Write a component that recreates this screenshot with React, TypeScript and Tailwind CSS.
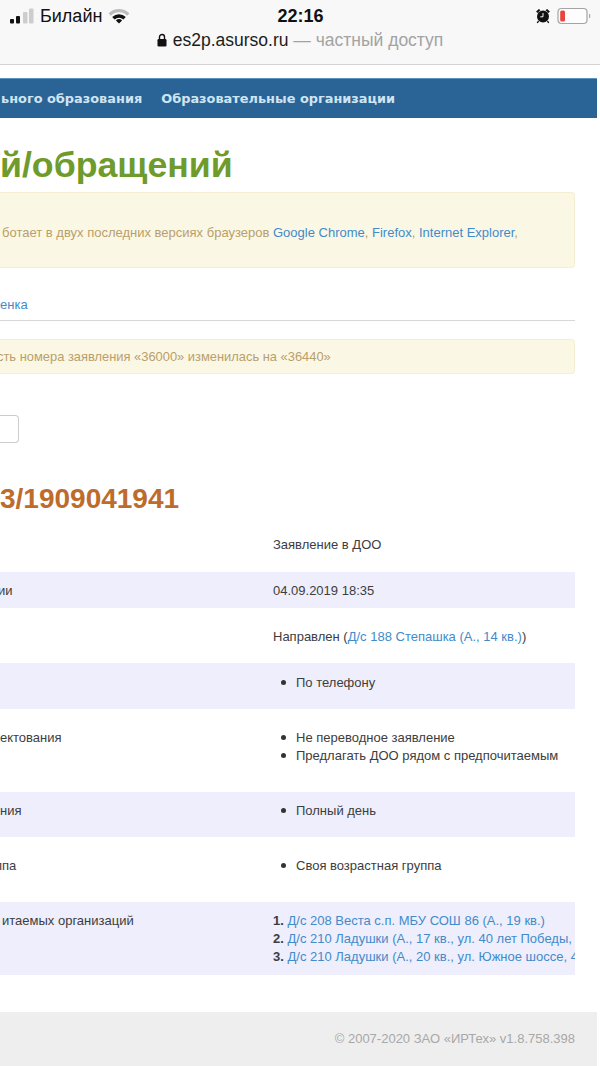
import type { ReactNode } from "react";

const sans = "font-['Liberation_Sans',Arial,sans-serif]";
const link = "text-[#428bca]";

const SignalIcon = () => (
  <svg width="25" height="16" viewBox="0 0 25 16" className="block">
    <rect x="1" y="11" width="4" height="4.5" rx="1" fill="#111" />
    <rect x="7" y="8" width="4" height="7.5" rx="1" fill="#111" />
    <rect x="14" y="4" width="4.5" height="11.5" rx="1" fill="#cdcdcd" />
    <rect x="20" y="0.5" width="4.5" height="15" rx="1" fill="#cdcdcd" />
  </svg>
);

const WifiIcon = () => (
  <svg width="22" height="16" viewBox="0 0 22 16" className="block">
    <path d="M0.5 5.2 A15 15 0 0 1 21.5 5.2 L19.2 7.7 A11.6 11.6 0 0 0 2.8 7.7 Z" fill="#bdbdbd" />
    <path d="M4.2 9 A10 10 0 0 1 17.8 9 L15.4 11.4 A6.6 6.6 0 0 0 6.6 11.4 Z" fill="#111" />
    <path d="M7.9 12.4 A4.6 4.6 0 0 1 14.1 12.4 L11 15.5 Z" fill="#111" />
  </svg>
);

const LockIcon = () => (
  <svg width="10" height="14" viewBox="0 0 10 14" className="block">
    <path d="M2.5 6 V4 a2.5 2.5 0 0 1 5 0 V6" fill="none" stroke="#111" strokeWidth="1.4" />
    <rect x="0.5" y="6" width="9" height="7.5" rx="1.2" fill="#111" />
  </svg>
);

const AlarmIcon = () => (
  <svg width="16" height="16" viewBox="0 0 15 16" className="block">
    <circle cx="7.5" cy="8.5" r="6" fill="#111" />
    <path d="M0.6 3.6 L3.4 0.9 L5 2.2 L1.9 5 Z M14.4 3.6 L11.6 0.9 L10 2.2 L13.1 5 Z" fill="#111" />
    <path d="M7.5 5 V8.8 H4.8" fill="none" stroke="#f8f8f8" strokeWidth="1" />
    <path d="M3 13 L1.8 15 M12 13 L13.2 15" stroke="#111" strokeWidth="1.4" />
  </svg>
);

const BatteryIcon = () => (
  <svg width="35" height="18" viewBox="0 0 35 18" className="block">
    <rect x="1" y="1.5" width="29" height="15" rx="3.5" fill="#fdfdfd" stroke="#a5a5a5" strokeWidth="1.2" />
    <rect x="3.2" y="3.6" width="4.8" height="10.8" rx="1.5" fill="#e8453c" />
    <path d="M32 6.5 a3 3 0 0 1 0 5 Z" fill="#a5a5a5" />
  </svg>
);

const BrowserBar = () => (
  <header className="h-[65px] bg-[#f8f8f8] border-b border-[#d4d4d4] flex flex-col">
    <div className="h-[29px] pt-[3px] pl-[9px] pr-[8px] grid grid-cols-3 items-center">
      <div className="flex items-center">
        <SignalIcon />
        <span className={`${sans} ml-[6px] text-[18px] leading-5 text-[#111]`}>Билайн</span>
        <span className="ml-[6px]"><WifiIcon /></span>
      </div>
      <div className={`${sans} text-center text-[18px] leading-5 font-bold text-[#111]`}>22:16</div>
      <div className="flex items-center justify-end gap-[6px]">
        <AlarmIcon />
        <BatteryIcon />
      </div>
    </div>
    <div className={`${sans} h-[22px] flex items-center justify-center gap-[6px] text-[17.5px] leading-5`}>
      <LockIcon />
      <span className="text-[#1c1c1c]">
        es2p.asurso.ru <span className="text-[#a3a3a3]">— частный доступ</span>
      </span>
    </div>
  </header>
);

const NavBar = () => (
  <nav className="mt-[13px] mr-[3px] h-[40px] pl-[1px] bg-[#2a6496] border-t border-[#5b93bd] flex items-center gap-[19px] font-['DejaVu_Sans',Verdana,sans-serif] text-[12.9px] font-bold text-[#d0e4f2] whitespace-nowrap">
    <span>ьного образования</span>
    <span>Образовательные организации</span>
  </nav>
);

const Bullets = ({ items }: { items: string[] }) => (
  <ul>
    {items.map((item) => (
      <li key={item} className="flex">
        <span className="ml-[8px] mr-[10px] mt-[6px] size-[5px] rounded-full bg-[#333]" />
        {item}
      </li>
    ))}
  </ul>
);

const Row = ({ label, shaded, cls, children }: { label?: ReactNode; shaded?: boolean; cls: string; children: ReactNode }) => (
  <div className={`grid grid-cols-[273px_302px] overflow-hidden ${cls} ${shaded ? "bg-[#eeeefc]" : ""}`}>
    <div>{label}</div>
    <div className="min-w-0">{children}</div>
  </div>
);

const Details = () => (
  <div className="text-[13px] leading-[18px] text-[#3d3d3d]">
    <Row cls="h-[56px] pt-[20px]">Заявление в ДОО</Row>
    <Row label={<span className="inline-block -ml-[2px]">ии</span>} shaded cls="h-[36px] pt-[10px]">04.09.2019 18:35</Row>
    <Row cls="h-[55px] pt-[20px]">
      Направлен (<a className={link}>Д/с 188 Степашка (А., 14 кв.)</a>)
    </Row>
    <Row shaded cls="h-[46px] pt-[11px]"><Bullets items={["По телефону"]} /></Row>
    <Row label="ектования" cls="h-[83px] pt-[20px]">
      <Bullets items={["Не переводное заявление", "Предлагать ДОО рядом с предпочитаемым"]} />
    </Row>
    <Row label="ния" shaded cls="h-[45px] pt-[10px]"><Bullets items={["Полный день"]} /></Row>
    <Row label={<span className="inline-block -ml-[5px]">ппа</span>} cls="h-[65px] pt-[20px]"><Bullets items={["Своя возрастная группа"]} /></Row>
    <Row label={<span className="inline-block ml-[2px]">итаемых организаций</span>} shaded cls="h-[73px] pt-[10px]">
      <ol className="whitespace-nowrap">
        <li><b>1.</b> <a className={link}>Д/с 208 Веста с.п. МБУ СОШ 86 (А., 19 кв.)</a></li>
        <li><b>2.</b> <a className={link}>Д/с 210 Ладушки (А., 17 кв., ул. 40 лет Победы, 30)</a></li>
        <li><b>3.</b> <a className={link}>Д/с 210 Ладушки (А., 20 кв., ул. Южное шоссе, 47)</a></li>
      </ol>
    </Row>
  </div>
);

export default function App() {
  return (
    <div className={`${sans} w-[600px] h-[1066px] overflow-hidden bg-white`}>
      <BrowserBar />
      <NavBar />
      <main className="pr-[25px]">
        <h1 className="mt-[27px] h-[47px] text-[35.7px] leading-[40px] font-bold text-[#6f9a2c] whitespace-nowrap">й/обращений</h1>
        <div className="h-[76px] bg-[#fbf7e5] border border-[#f5eed3] border-l-0 rounded-r-[4px] pt-[31px] pl-[2px] text-[13px] leading-[18px] text-[#b99f6b] whitespace-nowrap">
          ботает в двух последних версиях браузеров <a className={link}>Google Chrome</a>, <a className={link}>Firefox</a>, <a className={link}>Internet Explorer</a>,
        </div>
        <div className={`mt-[27px] h-[26px] pt-[1px] border-b border-[#d8d8d8] text-[13px] leading-[18px] ${link}`}>енка</div>
        <div className="mt-[18px] h-[35px] bg-[#fbf7e5] border border-[#f5eed3] border-l-0 rounded-r-[4px] pt-[8px] text-[12.9px] leading-[18px] text-[#b99f6b] whitespace-nowrap">
          <span className="inline-block -ml-[3px]">сть номера заявления «36000» изменилась на «36440»</span>
        </div>
        <div className="mt-[41px] w-[19px] h-[28px] bg-white border border-[#cccccc] border-l-0 rounded-r-[4px]" />
        <h2 className="mt-[39px] h-[34px] text-[28px] leading-[34px] font-bold text-[#bd6c2b] whitespace-nowrap">3/1909041941</h2>
        <Details />
      </main>
      <footer className="mt-[37px] mr-[3px] h-[54px] bg-[#eeeeee] pr-[22px] flex items-center justify-end text-[13px] text-[#a8a8a8]">
        © 2007-2020 ЗАО «ИРТех» v1.8.758.398
      </footer>
    </div>
  );
}
